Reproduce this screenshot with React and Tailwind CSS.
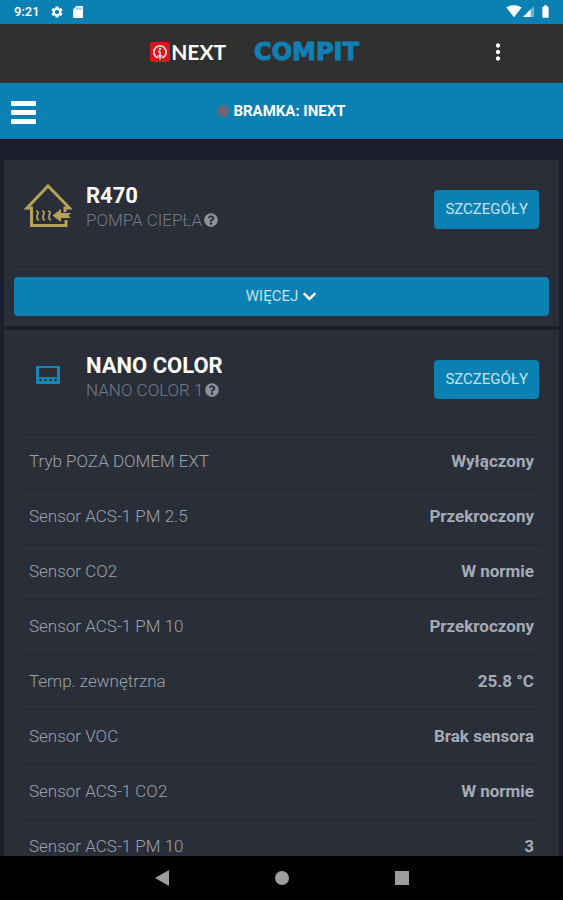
import React from 'react';
import { FaChevronDown, FaQuestionCircle } from 'react-icons/fa';
import { MdBatteryFull, MdMoreVert, MdSettings } from 'react-icons/md';

const readings = [
  { label: 'Tryb POZA DOMEM EXT', value: 'Wyłączony' },
  { label: 'Sensor ACS-1 PM 2.5', value: 'Przekroczony' },
  { label: 'Sensor CO2', value: 'W normie' },
  { label: 'Sensor ACS-1 PM 10', value: 'Przekroczony' },
  { label: 'Temp. zewnętrzna', value: '25.8 °C' },
  { label: 'Sensor VOC', value: 'Brak sensora' },
  { label: 'Sensor ACS-1 CO2', value: 'W normie' },
  { label: 'Sensor ACS-1 PM 10', value: '3' },
];

function StatusBar() {
  return (
    <div className="h-6 shrink-0 flex items-center justify-between pl-3.5 pr-2.5 bg-[#0b80b2] text-white">
      <div className="flex items-center gap-2">
        <span className="w-7 text-[13px] font-medium">9:21</span>
        <MdSettings size={14} />
        <svg width="12" height="14" viewBox="0 0 12 14" fill="currentColor">
          <path d="M4.5 1H10a1 1 0 0 1 1 1v10a1 1 0 0 1-1 1H2a1 1 0 0 1-1-1V4.5z" />
          <path d="M5 2.5v2M7 2.5v2M9 2.5v2" stroke="#0b80b2" strokeWidth="0.8" />
        </svg>
      </div>
      <div className="flex items-center pb-0.5">
        <svg width="16" height="14" viewBox="0 0 16 14" fill="currentColor">
          <path d="M8 13.3 0.3 3.6C4.5 0.3 11.5 0.3 15.7 3.6z" />
        </svg>
        <svg width="14" height="14" viewBox="0 0 14 14" fill="currentColor">
          <path d="M1 13 12 2v11z" opacity="0.4" />
          <path d="M1 13 8.5 5.5V13z" />
        </svg>
        <MdBatteryFull size={15} className="ml-0.5" />
      </div>
    </div>
  );
}

function BrandBar() {
  return (
    <header className="h-[59px] shrink-0 flex items-center pb-1 bg-[#303030]">
      <div className="flex-1 flex items-center justify-center gap-7 pl-7">
        <a href="#inext" className="flex items-center gap-px" aria-label="iNEXT">
          <svg width="20" height="20" viewBox="0 0 20 20" fill="none">
            <rect width="20" height="20" rx="2.5" fill="#d9151d" />
            <path d="M8 16A6.2 6.2 0 1 1 12 16" stroke="#f9d5d6" strokeWidth="1.8" />
            <path d="M10 9.5v8M8 9.5h2M7.500 14h5" stroke="#f9d5d6" strokeWidth="1.6" />
            <circle cx="10" cy="7" r="1.2" fill="#f9d5d6" />
          </svg>
          <span className="font-['Lato',sans-serif] text-[21px] font-bold leading-5 text-white">NEXT</span>
        </a>
        <a
          href="#compit"
          className="font-['DejaVu_Sans',sans-serif] text-2xl font-bold leading-5 text-[#1080b4] [-webkit-text-stroke:1px_#1080b4]"
        >
          COMPIT
        </a>
      </div>
      <button type="button" aria-label="Menu" className="ml-1 mr-13 text-white">
        <MdMoreVert size={26} />
      </button>
    </header>
  );
}

function GatewayBar() {
  return (
    <nav className="h-14 shrink-0 grid grid-cols-[1fr_auto_1fr] items-center bg-[#0b80b2] text-white">
      <button type="button" aria-label="Nawigacja" className="justify-self-start ml-2.5">
        <svg width="26" height="26" viewBox="0 0 26 26" fill="currentColor">
          <rect x="1" y="3" width="25" height="5" rx="1" />
          <rect x="1" y="12" width="25" height="5" rx="1" />
          <rect x="1" y="21" width="25" height="5" rx="1" />
        </svg>
      </button>
      <div className="flex items-center gap-1">
        <span className="size-3 rounded-full bg-[#6b6670]" />
        <h1 className="text-[15px] font-bold">BRAMKA: INEXT</h1>
      </div>
    </nav>
  );
}

function HeatPumpIcon() {
  return (
    <svg width="48" height="46" viewBox="0 0 48 46" fill="none" stroke="#b5a457" strokeWidth="3">
      <path d="M42 38v5.5H7.5V26H3L24 4l21.500 22H41v4" />
      <g strokeWidth="1.7">
        <path d="M12 29c4 0 1 3.5 1 5.5s0 3.5 2 3.5" />
        <path d="M18 29c4 0 1 3.5 1 5.5s0 3.5 2 3.5" />
        <path d="M24 29c4 0 1 3.5 1 5.5s0 3.5 2 3.5" />
      </g>
      <path d="M28.5 33.500 37 27v4h10l-2.500 2.500 2.500 2.500H37v4z" fill="#b5a457" stroke="none" />
    </svg>
  );
}

function PanelIcon() {
  return (
    <svg width="24" height="18" viewBox="0 0 24 18">
      <path
        fillRule="evenodd"
        fill="#1687b5"
        d="M1 0h22a1 1 0 0 1 1 1v16a1 1 0 0 1-1 1H1a1 1 0 0 1-1-1V1a1 1 0 0 1 1-1zM3 2v9h18V2z"
      />
      <g fill="#292e39">
        <circle cx="4.5" cy="14" r="1.3" />
        <circle cx="9.5" cy="14" r="1.3" />
        <circle cx="14.5" cy="14" r="1.3" />
        <circle cx="19.5" cy="14" r="1.3" />
      </g>
    </svg>
  );
}

function DeviceHeader({ icon, name, type }) {
  return (
    <div className="flex items-start h-26 pt-[22px] px-5">
      <div className="w-12 h-[46px] shrink-0 flex items-center justify-center">{icon}</div>
      <div className="flex-1 ml-3.5">
        <h2 className="text-[22px] leading-7 font-bold text-white">{name}</h2>
        <p className="flex items-center gap-0.5 text-[17px] leading-5 font-light text-[#747b87]">
          {type}
          <FaQuestionCircle size={14} className="text-[#8c939e]" />
        </p>
      </div>
      <button
        type="button"
        className="h-[39px] mt-2 px-[11px] rounded bg-[#0b80b2] text-[15px] text-[#c4e1ef]"
      >
        SZCZEGÓŁY
      </button>
    </div>
  );
}

function AndroidNav() {
  return (
    <div className="h-11 shrink-0 flex items-center justify-center gap-26 bg-black text-[#9d9d9d]">
      <button type="button" aria-label="Wstecz">
        <svg width="16" height="16" viewBox="0 0 16 16" fill="currentColor">
          <path d="M1 8 15 0v16z" />
        </svg>
      </button>
      <button type="button" aria-label="Ekran główny">
        <svg width="16" height="16" viewBox="0 0 16 16" fill="currentColor">
          <circle cx="8" cy="8" r="7" />
        </svg>
      </button>
      <button type="button" aria-label="Ostatnie">
        <svg width="16" height="16" viewBox="0 0 16 16" fill="currentColor">
          <rect x="1" y="1" width="14" height="14" />
        </svg>
      </button>
    </div>
  );
}

export default function App() {
  return (
    <div className="h-screen flex flex-col bg-[#1c1f2b] font-['Roboto',sans-serif]">
      <StatusBar />
      <BrandBar />
      <GatewayBar />
      <main className="flex-1 min-h-0 overflow-hidden flex flex-col gap-1 border-t border-[#14151c] px-1 pt-5">
        <section className="shrink-0 bg-[#292e39] pb-2.5">
          <DeviceHeader icon={<HeatPumpIcon />} name="R470" type="POMPA CIEPŁA" />
          <div className="mx-3 mt-0.5 mb-2.5 border-t border-[#222732]" />
          <div className="px-2.5">
            <button
              type="button"
              className="w-full h-[39px] flex items-center justify-center gap-1 rounded bg-[#0b80b2] text-[15px] text-[#c4e1ef]"
            >
              WIĘCEJ
              <FaChevronDown size={15} className="text-white" />
            </button>
          </div>
        </section>

        <section className="shrink-0 bg-[#292e39]">
          <DeviceHeader icon={<PanelIcon />} name="NANO COLOR" type="NANO COLOR 1" />
          <table className="w-full text-[17px]">
            <tbody>
              {readings.map((r, i) => (
                <tr key={i}>
                  <th scope="row" className="p-0 pl-4 text-left font-light text-[#9ca2ac]">
                    <div className="h-[55px] flex items-center pl-[9px] border-t border-[#222732]">{r.label}</div>
                  </th>
                  <td className="p-0 pr-4 font-bold text-[#a5abb5]">
                    <div className="h-[55px] flex items-center justify-end pr-[9px] border-t border-[#222732]">{r.value}</div>
                  </td>
                </tr>
              ))}
            </tbody>
          </table>
        </section>
      </main>
      <AndroidNav />
    </div>
  );
}
